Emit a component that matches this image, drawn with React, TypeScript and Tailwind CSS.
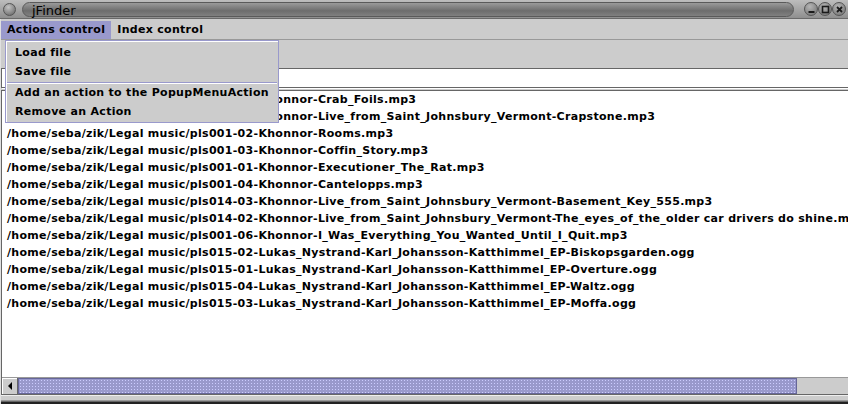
import React from "react";

const rows = [
  "/home/seba/zik/Legal music/pls001-05-Khonnor-Crab_Foils.mp3",
  "/home/seba/zik/Legal music/pls014-01-Khonnor-Live_from_Saint_Johnsbury_Vermont-Crapstone.mp3",
  "/home/seba/zik/Legal music/pls001-02-Khonnor-Rooms.mp3",
  "/home/seba/zik/Legal music/pls001-03-Khonnor-Coffin_Story.mp3",
  "/home/seba/zik/Legal music/pls001-01-Khonnor-Executioner_The_Rat.mp3",
  "/home/seba/zik/Legal music/pls001-04-Khonnor-Cantelopps.mp3",
  "/home/seba/zik/Legal music/pls014-03-Khonnor-Live_from_Saint_Johnsbury_Vermont-Basement_Key_555.mp3",
  "/home/seba/zik/Legal music/pls014-02-Khonnor-Live_from_Saint_Johnsbury_Vermont-The_eyes_of_the_older car drivers do shine.mp3",
  "/home/seba/zik/Legal music/pls001-06-Khonnor-I_Was_Everything_You_Wanted_Until_I_Quit.mp3",
  "/home/seba/zik/Legal music/pls015-02-Lukas_Nystrand-Karl_Johansson-Katthimmel_EP-Biskopsgarden.ogg",
  "/home/seba/zik/Legal music/pls015-01-Lukas_Nystrand-Karl_Johansson-Katthimmel_EP-Overture.ogg",
  "/home/seba/zik/Legal music/pls015-04-Lukas_Nystrand-Karl_Johansson-Katthimmel_EP-Waltz.ogg",
  "/home/seba/zik/Legal music/pls015-03-Lukas_Nystrand-Karl_Johansson-Katthimmel_EP-Moffa.ogg",
];

const font = "font-['DejaVu_Sans',sans-serif] font-bold text-[11px] tracking-[0.3px] whitespace-nowrap";

function TitleButton({ kind }: { kind: "min" | "max" | "close" }) {
  return (
    <div className="w-[14px] h-[14px] rounded-full bg-[radial-gradient(circle_at_40%_30%,#b5b5b5,#6e6e6e)] border border-[#555] flex items-center justify-center">
      <svg width="9" height="9" viewBox="0 0 9 9">
        {kind === "min" && <rect x="1.5" y="6" width="6" height="2" fill="#1a1a1a" />}
        {kind === "max" && <rect x="1.5" y="1.5" width="6" height="6" fill="none" stroke="#1a1a1a" strokeWidth="1.6" />}
        {kind === "close" && (
          <path d="M2 2 L7 7 M7 2 L2 7" stroke="#1a1a1a" strokeWidth="1.8" />
        )}
      </svg>
    </div>
  );
}

export default function App() {
  return (
    <div className="w-[848px] h-[404px] bg-[#cccccc] flex flex-col relative overflow-hidden">
      {/* Title bar */}
      <div className="h-[19px] flex items-center bg-[linear-gradient(#bdbdbd,#8f8f8f)] border-b border-[#6a6a6a] pl-[3px] pr-[2px] gap-[6px]">
        <div className="w-[13px] h-[13px] rounded-full bg-[radial-gradient(circle_at_40%_30%,#c4c4c4,#5f5f5f)] border border-[#555] shrink-0" />
        <div className="flex-1 h-[15px] rounded-full bg-[linear-gradient(#9a9a9a,#6d6d6d_60%,#808080)] border border-[#5a5a5a] flex items-center pl-[9px] mr-[4px]">
          <span className="font-['DejaVu_Sans',sans-serif] text-[13px] leading-none text-black -mb-[2px]">jFinder</span>
        </div>
        <div className="flex shrink-0">
          <TitleButton kind="min" />
          <TitleButton kind="max" />
          <TitleButton kind="close" />
        </div>
      </div>

      {/* Body with frame */}
      <div className="flex-1 flex">
        <div className="w-[4px] bg-[#c8c8c8] border-r border-[#e0e0e0]" />
        <div className="flex-1 flex flex-col">
          {/* Menu bar */}
          <div className={`h-[21px] flex items-stretch border-b border-[#999999] pt-[2px] ${font}`}>
            <div className="bg-[#9999cc] px-[6px] flex items-center text-black">Actions control</div>
            <div className="px-[6px] flex items-center text-black">Index control</div>
          </div>
          {/* Toolbar area */}
          <div className="h-[28px]" />
          {/* Text field */}
          <div className="h-[20px] bg-white border border-[#666666] shadow-[1px_1px_0_#ffffff]" />
          {/* Scroll pane */}
          <div className="mt-[2px] flex-1 flex flex-col border border-[#666666] shadow-[1px_1px_0_#ffffff]">
            <div className={`flex-1 bg-white overflow-hidden pl-[5px] ${font} text-black`}>
              {rows.map((r) => (
                <div key={r} className="h-[17px] leading-[17px]">
                  {r}
                </div>
              ))}
            </div>
            {/* Horizontal scrollbar */}
            <div className="h-[17px] flex bg-[#cccccc] border-t border-[#999999]">
              <div className="w-[16px] border-r border-[#666666] flex items-center justify-center bg-[#cccccc] shadow-[inset_1px_1px_0_#ffffff]">
                <svg width="6" height="8" viewBox="0 0 6 8"><path d="M5 0 L1 4 L5 8 Z" fill="#000" /></svg>
              </div>
              <div className="w-[779px] bg-[#9999cc] border border-[#666699] bg-[radial-gradient(circle,#ccccff_0.7px,transparent_0.9px)] bg-[length:3px_3px]" />
              <div className="flex-1" />
              <div className="w-[16px] border-l border-[#666666] flex items-center justify-center shadow-[inset_1px_1px_0_#ffffff]">
                <svg width="6" height="8" viewBox="0 0 6 8"><path d="M1 0 L5 4 L1 8 Z" fill="#000" /></svg>
              </div>
            </div>
          </div>
          <div className="h-[9px] border-t border-[#eeeeee] flex flex-col">
            <div className="h-[4px]" />
            <div className="h-[2px] bg-[#666666] border-t border-[#999]" />
            <div className="flex-1 bg-[#222]" />
          </div>
        </div>
        <div className="w-[5px] flex">
          <div className="w-[2px] bg-[#bdbdbd]" />
          <div className="flex-1 bg-[#1e1e1e]" />
        </div>
      </div>

      {/* Popup menu */}
      <div className={`absolute left-[5px] top-[40px] w-[274px] h-[83px] bg-[#cccccc] border border-[#9999cc] shadow-[inset_1px_1px_0_#ffffff] ${font} text-black flex flex-col pt-[3px]`}>
        <div className="h-[19px] flex items-center pl-[9px]">Load file</div>
        <div className="h-[19px] flex items-center pl-[9px]">Save file</div>
        <div className="h-[2px] mx-[1px] border-t border-[#9999cc] border-b border-b-white" />
        <div className="h-[19px] flex items-center pl-[9px]">Add an action to the PopupMenuAction</div>
        <div className="h-[19px] flex items-center pl-[9px]">Remove an Action</div>
      </div>
    </div>
  );
}
